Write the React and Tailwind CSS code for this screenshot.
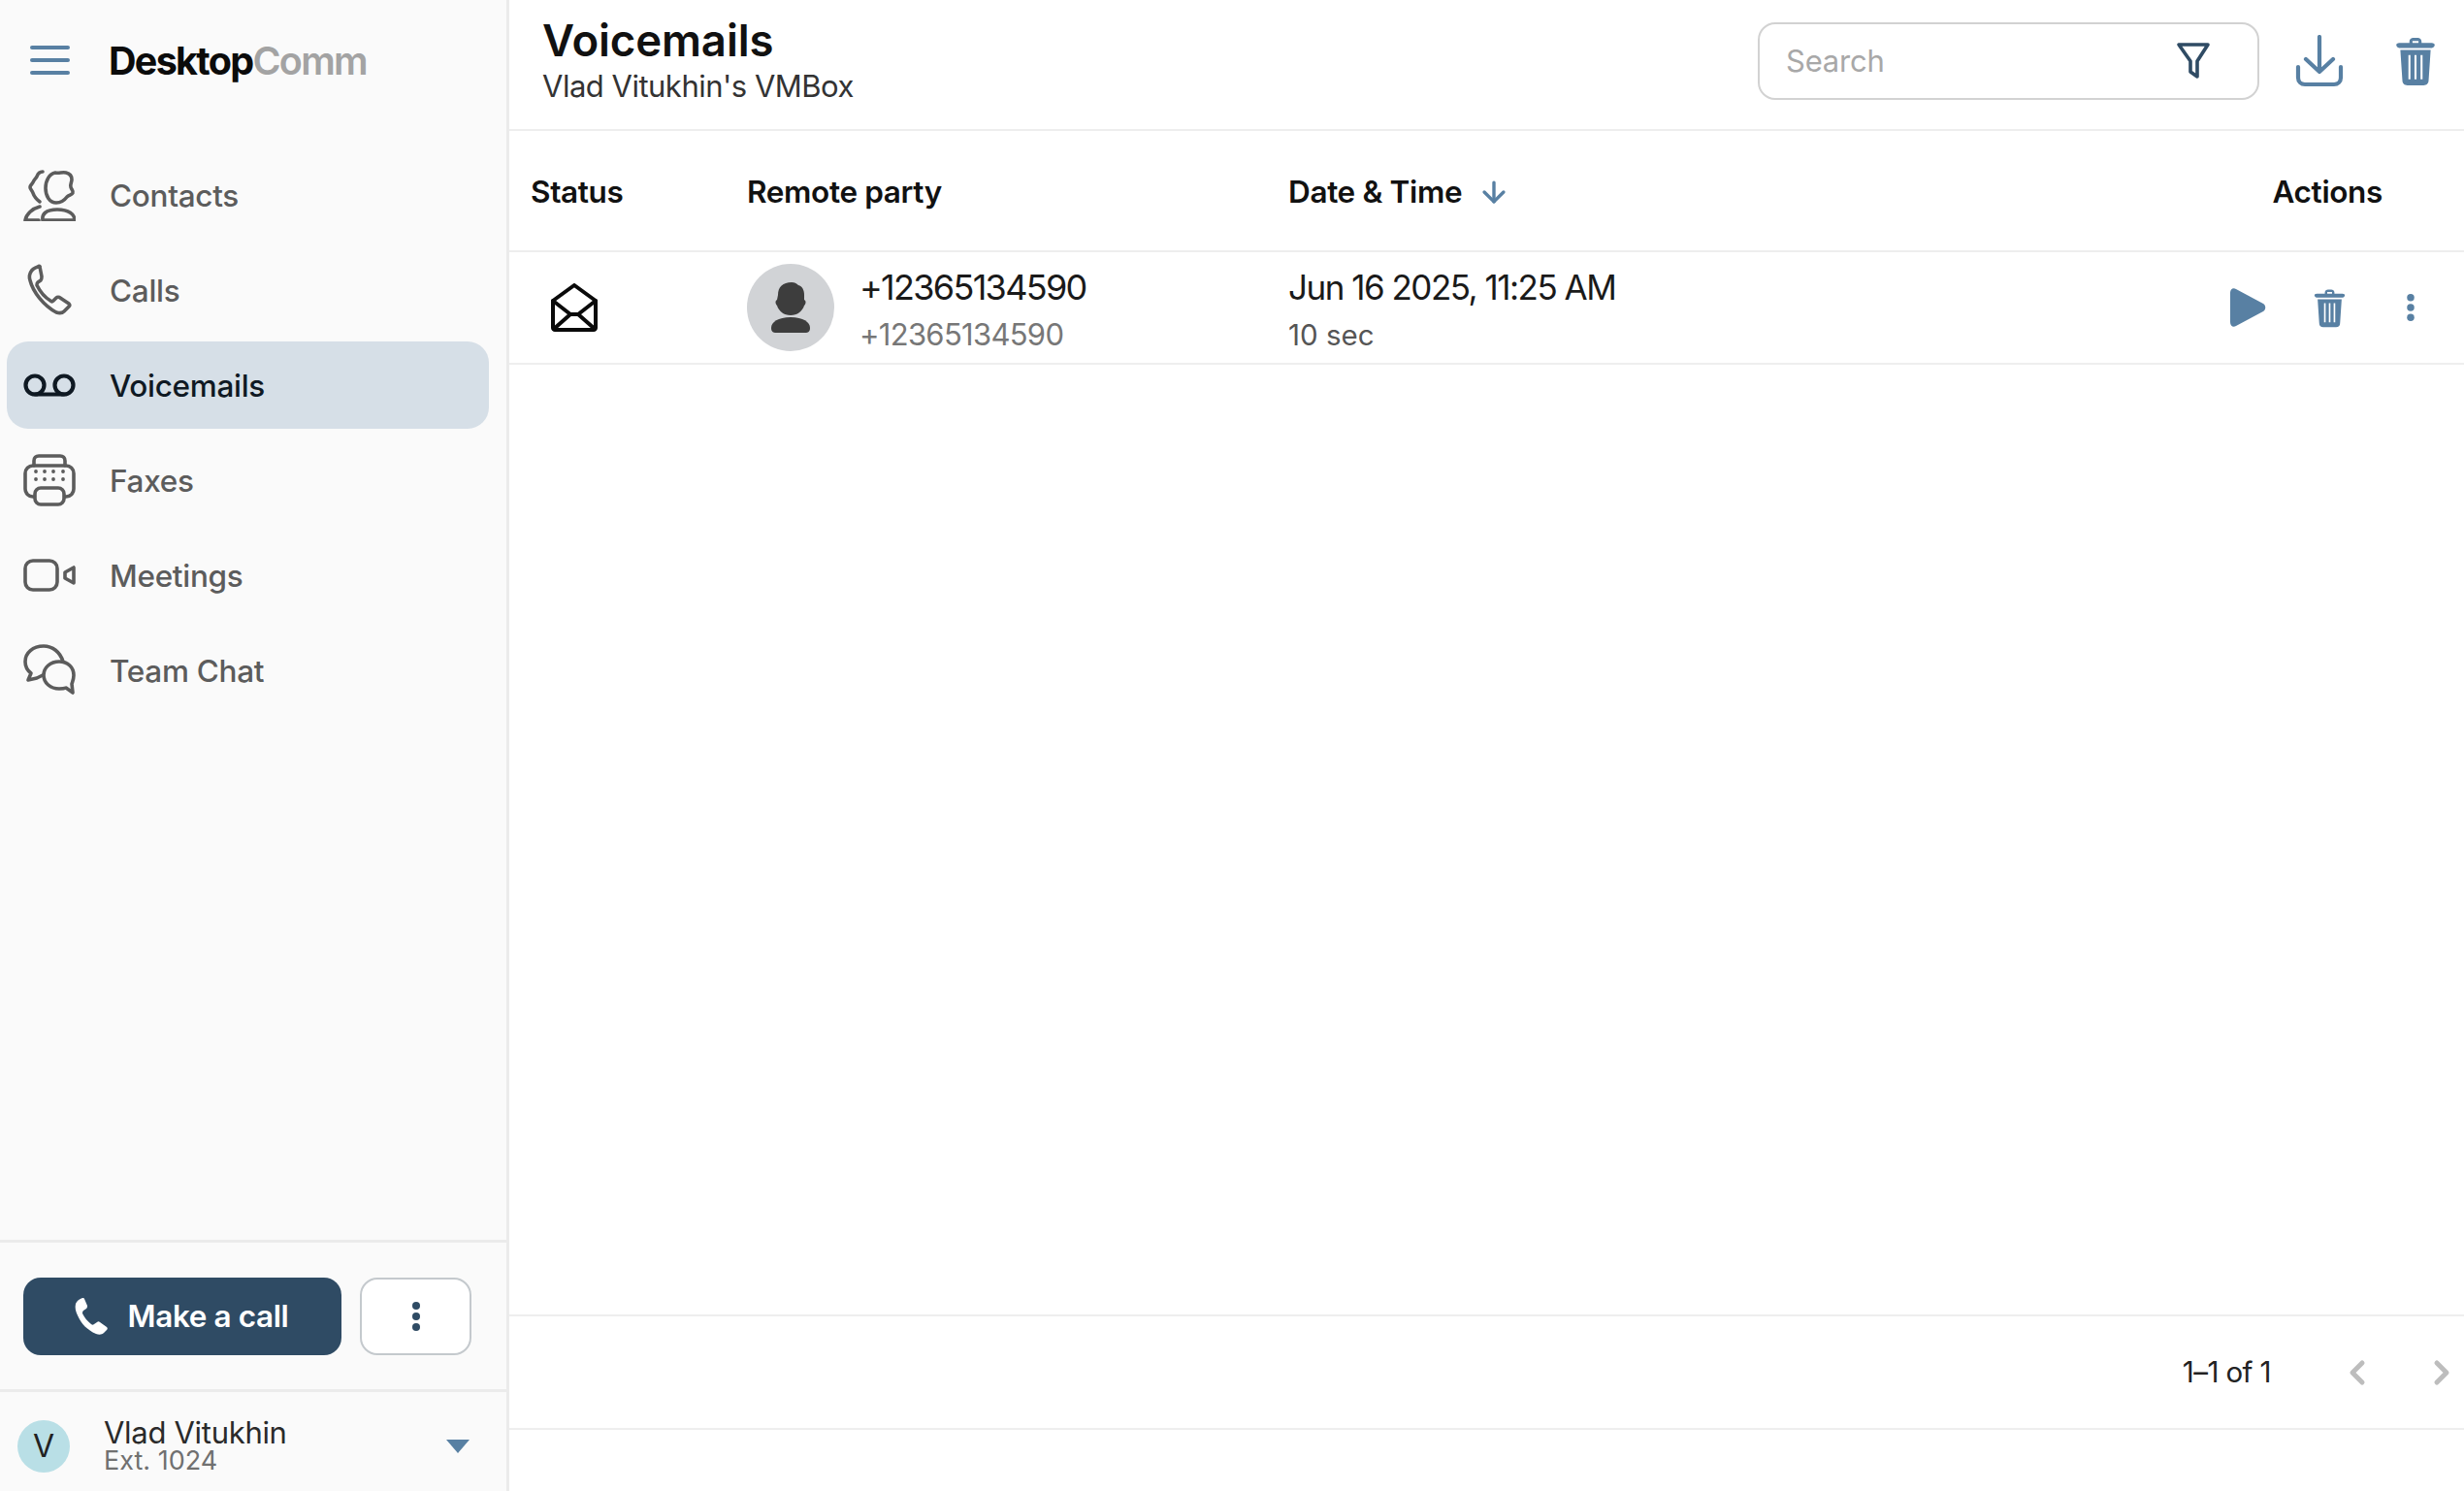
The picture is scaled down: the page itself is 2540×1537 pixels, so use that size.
import React from 'react';
import { ChevronLeft, ChevronRight, ArrowDown } from 'lucide-react';

const font = { fontFamily: 'Inter, "Noto Sans", sans-serif' };

function ContactsIcon() {
  return (
    <svg viewBox="0 0 54 54" className="w-[54px] h-[54px]" fill="none" stroke="currentColor" strokeWidth="3.6" strokeLinecap="round" strokeLinejoin="round">
      <path d="M33 4c4 1 7-1 11 0 4 1 6 3 6 7 0 3-2 5-1 8 1 3 3 4 2 6-1 2-4 2-6 4-3 4-7 6-11 6-7 0-11-7-11-15 0-8 4-15 10-16z" />
      <path d="M20 3c-3 0-5 2-6 5-1 2-3 3-4 6-1 2-3 3-3 5s2 3 3 6c1 3 3 6 7 9" />
      <path d="M20 53c-1-6 3-11 15-11s18 5 18 11z" />
      <path d="M17 39c-8 2-14 8-15 14h14" />
    </svg>
  );
}

function CallsIcon() {
  return (
    <svg viewBox="0 0 54 54" className="w-[54px] h-[54px]" fill="none" stroke="currentColor" strokeWidth="3.6" strokeLinecap="round" strokeLinejoin="round">
      <path d="M15 3c-3 1-6 3-7 5-2 3-2 6-1 9 3 12 14 26 27 33 3 1 6 1 8-1l5-5c1-1 1-2 0-3l-9-6c-1-1-3-1-4 0l-3 3c-1 1-2 1-3 0-5-3-11-10-14-16 0-1 0-2 1-3l3-2c1-1 1-2 1-4l-2-10c0-1-1-1-2 0z" />
    </svg>
  );
}

function VoicemailIcon() {
  return (
    <svg viewBox="0 0 54 54" className="w-[54px] h-[54px]" fill="none" stroke="currentColor" strokeWidth="4.2" strokeLinecap="round" strokeLinejoin="round">
      <circle cx="12" cy="27" r="9.5" />
      <circle cx="42" cy="27" r="9.5" />
      <path d="M12 36.5h30" />
    </svg>
  );
}

function FaxIcon() {
  return (
    <svg viewBox="0 0 54 54" className="w-[54px] h-[54px]" fill="none" stroke="currentColor" strokeWidth="3.6" strokeLinecap="round" strokeLinejoin="round">
      <path d="M11 12V7c0-3 2-5 5-5h22c3 0 5 2 5 5v5" />
      <rect x="2" y="12" width="50" height="32" rx="8" />
      <rect x="12" y="35" width="30" height="17" rx="6" fill="#fafafa" />
      <path d="M13 18h0M22 18h0M31 18h0M41 18h0M13 26h0M22 26h0M31 26h0M41 26h0" strokeWidth="3.8" />
    </svg>
  );
}

function VideoIcon() {
  return (
    <svg viewBox="0 0 54 54" className="w-[54px] h-[54px]" fill="none" stroke="currentColor" strokeWidth="3.6" strokeLinecap="round" strokeLinejoin="round">
      <rect x="2" y="12" width="33" height="30" rx="8" />
      <path d="M43 24l9-5v16l-9-5z" />
    </svg>
  );
}

function ChatIcon() {
  return (
    <svg viewBox="0 0 54 54" className="w-[54px] h-[54px]" fill="none" stroke="currentColor" strokeWidth="3.6" strokeLinecap="round" strokeLinejoin="round">
      <path d="M21 2C10 2 2 9 2 18c0 5 2 9 6 12l-3 7 9-2 6-3M41 18C38 8 30 2 21 2" />
      <path d="M37 18c-9 0-16 6-16 14s7 14 16 14c3 0 5 0 7-1l7 5-1-9c1-3 2-5 2-9 0-8-6-14-15-14z" />
    </svg>
  );
}

function TrashIcon({ className }) {
  return (
    <svg viewBox="0 0 40 48" className={className} fill="currentColor">
      <path d="M14 5c0-3 2-4 4-4h4c2 0 4 1 4 4v1h10c2 0 3 1 3 2s-1 3-3 3H4c-2 0-3-2-3-3s1-2 3-2h10zm3-1v2h6V4z" fillRule="evenodd" />
      <path fillRule="evenodd" d="M5 13h30l-2 30c0 3-2 5-5 5H12c-3 0-5-2-5-5zm8 5v24h2V18zm6 0v24h2V18zm6 0v24h2V18z" />
    </svg>
  );
}

function DotsIcon({ className }) {
  return (
    <svg viewBox="0 0 10 32" className={className} fill="currentColor">
      <circle cx="5" cy="5" r="4" />
      <circle cx="5" cy="16" r="4" />
      <circle cx="5" cy="27" r="4" />
    </svg>
  );
}

function NavItem({ icon, label, active }) {
  return (
    <div className={`flex items-center h-[90px] w-[497px] pl-[17px] rounded-[22px] ${active ? 'bg-[#d6dfe7] text-[#0f1923]' : 'text-[#5c5c5c]'}`}>
      {icon}
      <span className="ml-[35px] pt-[1px] text-[31.5px] font-medium tracking-[-0.3px]">{label}</span>
    </div>
  );
}

export default function App() {
  return (
    <div className="flex h-screen w-full bg-white overflow-hidden" style={font}>
      {/* Sidebar */}
      <aside className="flex flex-col w-[525px] shrink-0 bg-[#fafafa] border-r-[3px] border-[#ebebeb]">
        <div className="flex items-center h-[124px] pl-[31px]">
          <div className="flex flex-col gap-[9px] w-[41px]">
            <div className="h-[4px] bg-[#5880a3] rounded" />
            <div className="h-[4px] bg-[#5880a3] rounded" />
            <div className="h-[4px] bg-[#5880a3] rounded" />
          </div>
          <div className="ml-[40px] pt-[3px] text-[39.5px] font-bold tracking-[-1.7px] text-[#0b0b0b]">
            Desktop<span className="font-semibold text-[#a3a3a3]">Comm</span>
          </div>
        </div>

        <nav className="flex flex-col gap-[8px] pl-[7px] mt-[32px]">
          <NavItem icon={<ContactsIcon />} label="Contacts" />
          <NavItem icon={<CallsIcon />} label="Calls" />
          <NavItem icon={<VoicemailIcon />} label="Voicemails" active />
          <NavItem icon={<FaxIcon />} label="Faxes" />
          <NavItem icon={<VideoIcon />} label="Meetings" />
          <NavItem icon={<ChatIcon />} label="Team Chat" />
        </nav>

        <div className="mt-auto flex items-center gap-[19px] h-[154px] pl-[24px] border-t-[3px] border-[#ebebeb]">
          <div className="flex items-center justify-center h-[80px] w-[328px] pr-[5px] rounded-[18px] bg-[#2f4b64] text-white">
            <svg viewBox="0 0 40 40" className="w-[40px] h-[40px] mr-[18px]" fill="currentColor">
              <path d="M11 1c-3 1-6 3-7 6-1 4 0 8 2 12 4 9 10 15 19 19 3 1 6 1 8-1l3-3c1-1 1-2 0-3l-7-5c-1-1-2-1-3 0l-3 2c-1 1-2 1-3 0-4-3-7-7-9-11 0-1 0-2 1-3l3-2c1-1 1-2 1-3l-3-7c0-1-1-1-2-1z" />
            </svg>
            <span className="text-[31.5px] font-semibold tracking-[-0.4px]">Make a call</span>
          </div>
          <div className="flex items-center justify-center h-[80px] w-[115px] rounded-[18px] border-[2px] border-[#c4c9cd] bg-white text-[#2f4b64]">
            <DotsIcon className="w-[10px] h-[32px]" />
          </div>
        </div>

        <div className="flex items-center h-[105px] pt-[10px] pl-[18px] pr-[38px] border-t-[3px] border-[#ebebeb]">
          <div className="flex items-center justify-center w-[54px] h-[54px] rounded-full bg-[#b9dfe6] text-[32px] text-[#222]">V</div>
          <div className="ml-[35px] flex flex-col">
            <span className="text-[31px] leading-[30px] text-[#2a2a2a] tracking-[-0.3px]">Vlad Vitukhin</span>
            <span className="text-[27px] leading-[28px] text-[#707070]">Ext. 1024</span>
          </div>
          <svg viewBox="0 0 24 14" className="ml-auto w-[24px] h-[14px]" fill="#5880a3">
            <path d="M0 0h24L12 14z" />
          </svg>
        </div>
      </aside>

      {/* Main */}
      <main className="flex flex-col flex-1 min-w-0">
        <header className="flex items-center h-[135px] shrink-0 pl-[34px] pb-[8px] border-b-[2px] border-[#eeeeee]">
          <div>
            <h1 className="text-[45.5px] leading-[50px] font-semibold text-[#111] tracking-[-0.1px]">Voicemails</h1>
            <p className="mt-[3px] text-[31px] leading-[38px] text-[#333] tracking-[-0.5px]">Vlad Vitukhin's VMBox</p>
          </div>
          <div className="ml-auto flex items-center h-[80px] w-[517px] pl-[27px] pr-[48px] rounded-[18px] border-[2px] border-[#d2d2d2]">
            <span className="pt-[2px] text-[31px] text-[#a8a8a8] tracking-[-0.2px]">Search</span>
            <svg viewBox="0 0 36 40" className="ml-auto w-[36px] h-[40px]" fill="none" stroke="#2f4b64" strokeWidth="3.6" strokeLinejoin="round">
              <path d="M3 3h30L22 20v16l-7-5V20z" />
            </svg>
          </div>
          <svg viewBox="0 0 50 54" className="ml-[37px] w-[50px] h-[54px]" fill="none" stroke="#5880a3" strokeWidth="4.2" strokeLinecap="round" strokeLinejoin="round">
            <path d="M25 2v36M11 25l14 13 14-13" />
            <path d="M3 33v11c0 4 3 7 7 7h30c4 0 7-3 7-7V33" />
          </svg>
          <TrashIcon className="ml-[53px] mr-[29px] w-[42px] h-[50px] text-[#5880a3]" />
        </header>

        <div className="grid grid-cols-[223px_558px_1fr_auto] items-center h-[125px] pt-[3px] shrink-0 pl-[22px] pr-[84px] border-b-[2px] border-[#eeeeee] text-[31.5px] font-semibold text-[#111] tracking-[-0.35px]">
          <span>Status</span>
          <span>Remote party</span>
          <span className="flex items-center gap-[16px]">
            Date &amp; Time
            <ArrowDown className="w-[34px] h-[34px] text-[#5880a3]" strokeWidth={2.4} />
          </span>
          <span>Actions</span>
        </div>

        <div className="grid grid-cols-[223px_558px_1fr_auto] items-center h-[116px] shrink-0 pl-[22px] pr-[13px] border-b-[2px] border-[#eeeeee]">
          <svg viewBox="0 0 50 50" className="ml-[20px] w-[50px] h-[50px]" fill="none" stroke="#0a0a0a" strokeWidth="4" strokeLinecap="round" strokeLinejoin="round">
            <path d="M3 18L25 2l22 16v28c0 1-1 2-2 2H5c-1 0-2-1-2-2z" />
            <path d="M3 18l18 14h8l18-14M4 47l17-15M46 47L29 32" />
          </svg>
          <div className="flex items-center">
            <div className="flex items-center justify-center w-[90px] h-[90px] rounded-full bg-[#d1d3d6]">
              <svg viewBox="0 0 42 54" className="w-[42px] h-[54px]" fill="#3d3d3d">
                <path d="M8 14C8 6 13 1 22 1c3 0 5 1 7 3 4 1 6 5 6 10v5c2 1 2 4 0 6-2 6-7 10-14 10S9 31 7 25c-2-2-2-5 0-6z" />
                <path d="M1 48c0-6 7-11 20-11s20 5 20 11c0 4-2 5-5 5H6c-3 0-5-1-5-5z" />
              </svg>
            </div>
            <div className="ml-[26px] pt-[5px]">
              <div className="text-[36px] leading-[48px] text-[#1a1a1a] tracking-[-1.7px]">+12365134590</div>
              <div className="mt-[2px] text-[31px] leading-[46px] text-[#777] tracking-[-0.7px]">+12365134590</div>
            </div>
          </div>
          <div className="pt-[5px]">
            <div className="text-[35px] leading-[48px] text-[#1a1a1a] tracking-[-1.5px]">Jun 16 2025, 11:25 AM</div>
            <div className="mt-[2px] text-[29.5px] leading-[46px] text-[#555]">10 sec</div>
          </div>
          <div className="flex items-center">
            <div className="flex justify-center w-[84px]">
              <svg viewBox="0 0 38 40" className="w-[38px] h-[40px]" fill="#5880a3">
                <path d="M1 5c0-4 3-6 6-4l28 15c3 2 3 6 0 8L7 39c-3 2-6 0-6-4z" />
              </svg>
            </div>
            <div className="flex justify-center w-[84px]">
              <TrashIcon className="w-[33px] h-[41px] text-[#5880a3]" />
            </div>
            <div className="flex justify-center w-[84px]">
              <DotsIcon className="w-[10px] h-[30px] text-[#5880a3]" />
            </div>
          </div>
        </div>

        <div className="flex-1" />

        <div className="flex items-center justify-end h-[119px] shrink-0 border-y-[2px] border-[#eeeeee] pr-[3px]">
          <span className="text-[29.5px] text-[#222] tracking-[-0.6px]">1–1 of 1</span>
          <ChevronLeft className="ml-[69px] w-[40px] h-[40px] text-[#bdbdbd]" strokeWidth={3} />
          <ChevronRight className="ml-[47px] w-[40px] h-[40px] text-[#bdbdbd]" strokeWidth={3} />
        </div>
        <div className="h-[63px] shrink-0" />
      </main>
    </div>
  );
}
